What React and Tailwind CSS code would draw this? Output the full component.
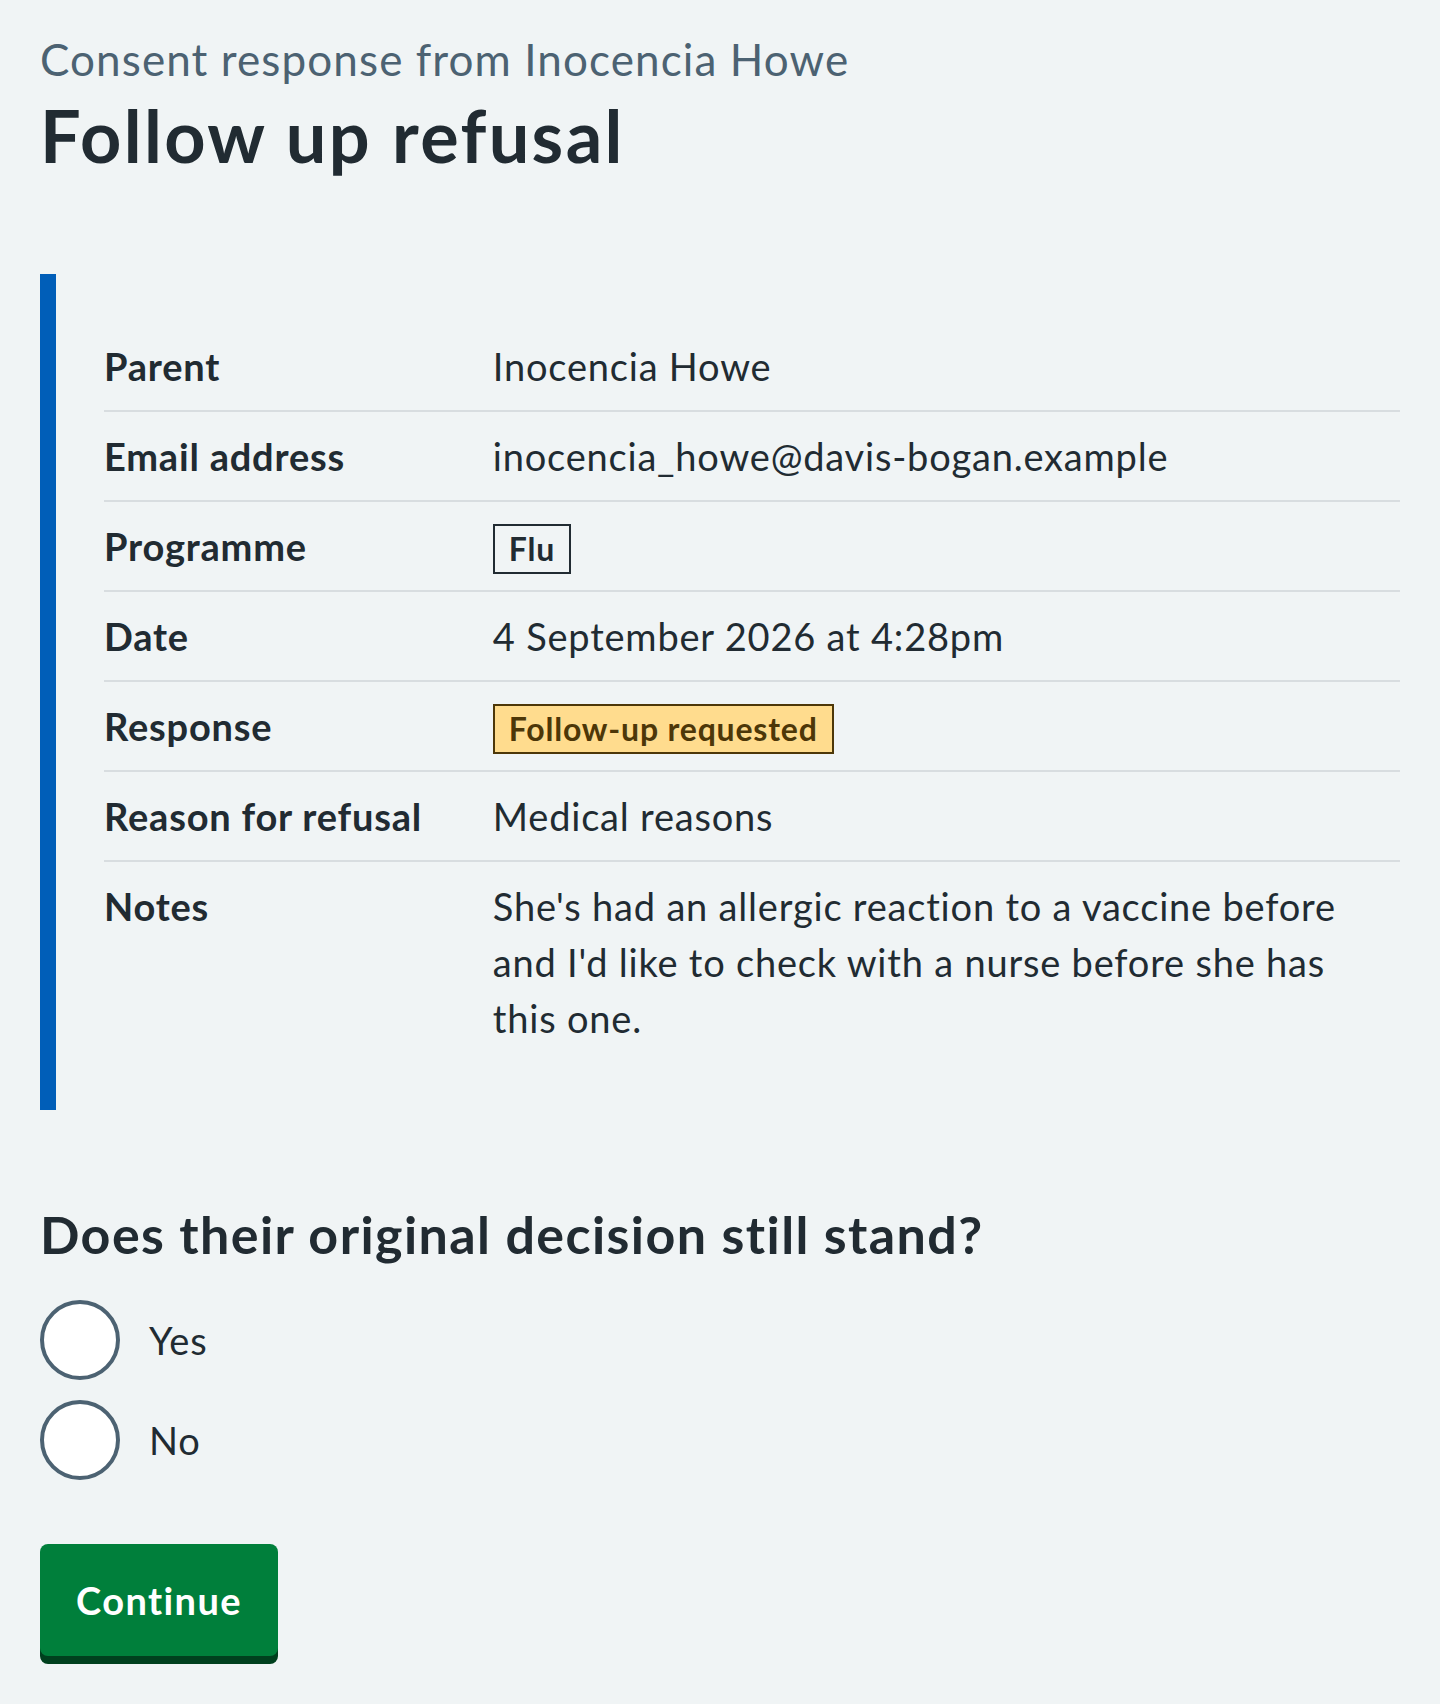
import React from 'react';

const rows = [
  { label: 'Parent', value: 'Inocencia Howe' },
  { label: 'Email address', value: 'inocencia_howe@davis-bogan.example' },
  {
    label: 'Programme',
    value: (
      <span className="inline-block border-2 border-[#212b32] px-[14px] py-[6px] text-[32px] leading-[34px] font-bold">
        Flu
      </span>
    ),
  },
  { label: 'Date', value: '4 September 2026 at 4:28pm' },
  {
    label: 'Response',
    value: (
      <span className="inline-block border-2 border-[#4d3708] bg-[#ffdc8e] px-[14px] py-[6px] text-[32px] leading-[34px] font-bold text-[#4d3708]">
        Follow-up requested
      </span>
    ),
  },
  { label: 'Reason for refusal', value: 'Medical reasons' },
  {
    label: 'Notes',
    value: "She's had an allergic reaction to a vaccine before and I'd like to check with a nurse before she has this one.",
  },
];

const Radio = ({ label }) => (
  <label className="flex items-center gap-[29px] mb-5">
    <span className="w-20 h-20 rounded-full border-4 border-[#4c6272] bg-white shrink-0" />
    <span className="text-[38px] leading-[56px]">{label}</span>
  </label>
);

export default function App() {
  return (
    <div className="min-h-screen bg-[#f0f4f5] text-[#212b32] font-['Lato',sans-serif] tracking-[0.05em]">
      <div className="px-10 pt-[27px] pb-10">
        <span className="block text-[44px] leading-[64px] tracking-[0.025em] text-[#4c6272]">
          Consent response from Inocencia Howe
        </span>
        <h1 className="mt-1 text-[72px] leading-[80px] font-bold tracking-[0.033em]">Follow up refusal</h1>

        {/* Inset with summary list */}
        <div className="mt-[99px] border-l-[16px] border-[#005eb8] pl-12 py-12">
          <dl>
            {rows.map((row, i) => (
              <div
                key={row.label}
                className={`flex py-4 text-[38px] leading-[56px] ${i < rows.length - 1 ? 'border-b-2 border-[#d8dde0]' : ''}`}
              >
                <dt className="w-[30%] shrink-0 pr-12 font-bold">{row.label}</dt>
                <dd className="flex-1 pr-4">{row.value}</dd>
              </div>
            ))}
          </dl>
        </div>

        <fieldset className="mt-[92px]">
          <legend className="text-[52px] leading-[64px] font-bold tracking-[0.027em]">
            Does their original decision still stand?
          </legend>
          <div className="mt-[34px]">
            <Radio label="Yes" />
            <Radio label="No" />
          </div>
        </fieldset>

        <button className="mt-11 rounded-lg bg-[#007f3b] px-9 py-7 text-[38px] leading-[56px] font-bold tracking-[0.037em] text-white shadow-[0_8px_0_#00401e]">
          Continue
        </button>
      </div>
    </div>
  );
}
